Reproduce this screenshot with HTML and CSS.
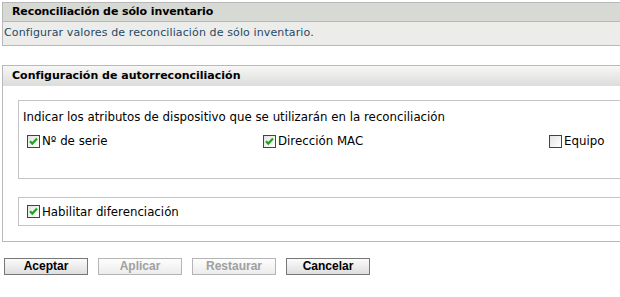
FILE: index.html
```html
<!DOCTYPE html>
<html lang="es">
<head>
<meta charset="utf-8">
<title>Reconciliación de sólo inventario</title>
<link rel="stylesheet" href="styles.css">
</head>
<body>
<section class="panel">
  <h1 class="panel-title">Reconciliación de sólo inventario</h1>
  <p class="panel-desc">Configurar valores de reconciliación de sólo inventario.</p>
</section>

<section class="panel panel-config">
  <h2 class="config-title">Configuración de autorreconciliación</h2>
  <div class="config-body">
    <div class="group group-attrs">
      <p class="group-label">Indicar los atributos de dispositivo que se utilizarán en la reconciliación</p>
      <div class="attr-row">
        <label class="check check-serie"><span class="box checked"><svg viewBox="0 0 13 13" width="13" height="13"><path d="M3 6.2 L5.3 8.6 L10 3.6" /></svg></span>Nº de serie</label>
        <label class="check check-mac"><span class="box checked"><svg viewBox="0 0 13 13" width="13" height="13"><path d="M3 6.2 L5.3 8.6 L10 3.6" /></svg></span>Dirección MAC</label>
        <label class="check check-equipo"><span class="box"></span>Equipo</label>
      </div>
    </div>
    <div class="group group-diff">
      <label class="check"><span class="box checked"><svg viewBox="0 0 13 13" width="13" height="13"><path d="M3 6.2 L5.3 8.6 L10 3.6" /></svg></span>Habilitar diferenciación</label>
    </div>
  </div>
</section>

<div class="buttons">
  <button class="btn">Aceptar</button>
  <button class="btn" disabled>Aplicar</button>
  <button class="btn" disabled>Restaurar</button>
  <button class="btn">Cancelar</button>
</div>
</body>
</html>
```

FILE: styles.css
```css
html, body {
  margin: 0;
  padding: 0;
  background: #ffffff;
}
body {
  font-family: "DejaVu Sans", Verdana, sans-serif;
  font-size: 11.8px;
  color: #000;
  overflow: hidden;
  padding: 2px 0 0 2px;
}
.panel {
  border: 1px solid #b8b8b8;
  margin-right: -20px;
}
.panel-title {
  margin: 0;
  height: 18px;
  line-height: 18px;
  background: #d7d9d4;
  border-bottom: 1px solid #b8b8b8;
  font-size: 11px;
  font-weight: bold;
  letter-spacing: -0.1px;
  padding-left: 9px;
  color: #000;
}
.panel-desc {
  margin: 0;
  height: 23px;
  line-height: 22px;
  background: #ececea;
  color: #1e4a66;
  font-size: 11px;
  letter-spacing: 0.12px;
  padding-left: 1px;
}
.panel-config {
  margin-top: 19px;
}
.config-title {
  margin: 0;
  height: 20px;
  line-height: 20px;
  background: linear-gradient(#f7f7f6, #dcdddb);
  font-size: 11px;
  font-weight: bold;
  padding-left: 9px;
  color: #000;
}
.config-body {
  padding: 14px 0 15px 15px;
  display: flex;
  flex-direction: column;
  gap: 18px;
}
.group {
  border: 1px solid #c4c4c4;
  border-right: none;
}
.group-attrs {
  padding: 9px 0 0 4px;
  box-sizing: border-box;
  height: 79px;
}
.group-label {
  margin: 0;
  line-height: 14px;
}
.attr-row {
  display: flex;
  margin-top: 10px;
  padding-left: 4px;
}
.check {
  display: flex;
  align-items: center;
  gap: 2px;
  line-height: 14px;
}
.check-serie { width: 236px; }
.check-mac { width: 286px; }
.box {
  width: 13px;
  height: 13px;
  box-sizing: border-box;
  border: 1px solid #1f4d78;
  background: linear-gradient(135deg, #e4e4e2, #ffffff);
  display: inline-block;
  position: relative;
  flex: none;
}
.box svg {
  position: absolute;
  left: -1px;
  top: -1px;
}
.box svg path {
  fill: none;
  stroke: #22a31f;
  stroke-width: 2.2;
}
.group-diff {
  height: 29px;
  box-sizing: border-box;
  padding-left: 8px;
  display: flex;
  align-items: center;
}
.buttons {
  display: flex;
  gap: 10px;
  margin-top: 16px;
  padding-left: 2px;
}
.btn {
  width: 84px;
  height: 17px;
  padding: 0;
  border: 1px solid #777;
  background: linear-gradient(#fbfbfb, #dedede);
  font-family: "Liberation Sans", Arial, sans-serif;
  font-size: 12px;
  font-weight: bold;
  color: #000;
  line-height: 15px;
}
.btn:disabled {
  border-color: #b4b4b4;
  color: #a0a0a0;
  background: linear-gradient(#fdfdfd, #ececec);
}
```
